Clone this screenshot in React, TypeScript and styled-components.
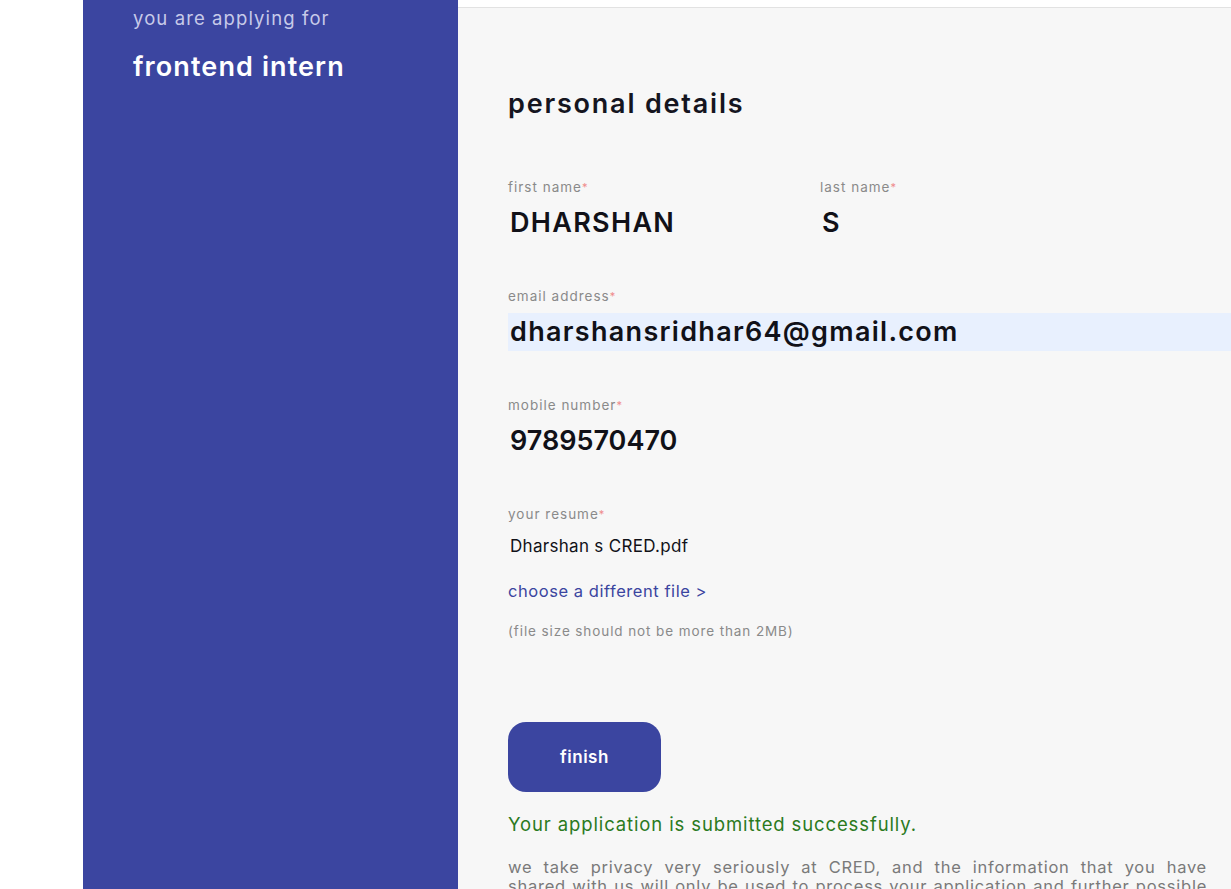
import React from "react";
import styled, { createGlobalStyle } from "styled-components";

const Global = createGlobalStyle`
  html, body { margin: 0; padding: 0; background: #ffffff; overflow: hidden; }
  body { font-family: Inter, "Noto Sans", sans-serif; }
  * { box-sizing: border-box; }
`;

const Page = styled.div`
  display: flex;
  padding-left: 83px;
  height: 889px;
  overflow: hidden;
`;

const Sidebar = styled.aside`
  width: 375px;
  flex-shrink: 0;
  background: #3b45a0;
  padding: 6px 0 0 50px;
`;

const Applying = styled.div`
  font-size: 18.5px;
  color: #c7cae9;
  line-height: 24px;
  letter-spacing: 1.1px;
`;

const Role = styled.div`
  margin-top: 20px;
  font-size: 27px;
  font-weight: 600;
  color: #ffffff;
  line-height: 34px;
  letter-spacing: 1.1px;
`;

const Main = styled.main`
  flex: 1;
  min-width: 0;
  background: #f7f7f7;
  margin-top: 7px;
  border-top: 1px solid #e2e2e2;
  padding: 76px 24px 0 50px;
`;

const Title = styled.h2`
  margin: 0 0 54px;
  font-size: 27px;
  font-weight: 600;
  color: #15151f;
  line-height: 40px;
  letter-spacing: 1.8px;
`;

const Row = styled.div`
  display: flex;
`;

const Field = styled.div<{ $width?: string; $gap?: number }>`
  width: ${(p) => p.$width || "auto"};
  margin-bottom: ${(p) => p.$gap ?? 45}px;
`;

const Label = styled.div`
  font-size: 13.5px;
  color: #8a8a8a;
  line-height: 18px;
  margin-bottom: 8px;
  letter-spacing: 1px;
`;

const Star = styled.span`
  color: #ef8b8b;
  font-size: 11px;
  vertical-align: top;
  margin-left: 0;
`;

const Value = styled.div<{ $fill?: boolean; $digits?: boolean }>`
  font-size: 27px;
  font-weight: 600;
  color: #111118;
  line-height: 38px;
  padding-left: 2px;
  letter-spacing: ${(p) => (p.$digits ? "0px" : "1.3px")};
  background: ${(p) => (p.$fill ? "#e8f0fe" : "transparent")};
  width: ${(p) => (p.$fill ? "760px" : "auto")};
`;

const FileName = styled.div`
  font-size: 17px;
  color: #111118;
  line-height: 24px;
  margin: 11px 0 0 2px;
  letter-spacing: 0.3px;
`;

const Link = styled.a`
  display: block;
  margin-top: 21px;
  font-size: 16.5px;
  color: #3b45a0;
  line-height: 24px;
  text-decoration: none;
  letter-spacing: 0.55px;
`;

const Note = styled.div`
  margin-top: 19px;
  font-size: 13.5px;
  color: #8a8a8a;
  line-height: 18px;
  letter-spacing: 0.9px;
`;

const Button = styled.button`
  margin-top: 82px;
  width: 153px;
  height: 70px;
  border: none;
  border-radius: 18px;
  background: #3b45a0;
  color: #ffffff;
  font-family: inherit;
  font-size: 17px;
  font-weight: 600;
  letter-spacing: 0.5px;
`;

const Success = styled.div`
  margin-top: 19px;
  font-size: 18.5px;
  color: #2b7a1e;
  line-height: 26px;
  letter-spacing: 0.88px;
`;

const Privacy = styled.p`
  margin: 21px 0 0;
  font-size: 16.5px;
  color: #7a7a7a;
  line-height: 19px;
  text-align: justify;
  letter-spacing: 0.75px;
`;

function Req({ children }: { children: React.ReactNode }) {
  return (
    <Label>
      {children}
      <Star>*</Star>
    </Label>
  );
}

export default function App() {
  return (
    <>
      <Global />
      <Page>
        <Sidebar>
          <Applying>you are applying for</Applying>
          <Role>frontend intern</Role>
        </Sidebar>
        <Main>
          <Title>personal details</Title>
          <Row>
            <Field $width="312px">
              <Req>first name</Req>
              <Value>DHARSHAN</Value>
            </Field>
            <Field>
              <Req>last name</Req>
              <Value>S</Value>
            </Field>
          </Row>
          <Field>
            <Req>email address</Req>
            <Value $fill>dharshansridhar64@gmail.com</Value>
          </Field>
          <Field>
            <Req>mobile number</Req>
            <Value $digits>9789570470</Value>
          </Field>
          <Field $gap={0}>
            <Req>your resume</Req>
            <FileName>Dharshan s CRED.pdf</FileName>
            <Link>choose a different file &gt;</Link>
            <Note>(file size should not be more than 2MB)</Note>
          </Field>
          <Button>finish</Button>
          <Success>Your application is submitted successfully.</Success>
          <Privacy>
            we take privacy very seriously at CRED, and the information that you have
            shared{"\u00a0"}with us will only be used to process your application and further possible
            communication regarding your candidature.
          </Privacy>
        </Main>
      </Page>
    </>
  );
}
